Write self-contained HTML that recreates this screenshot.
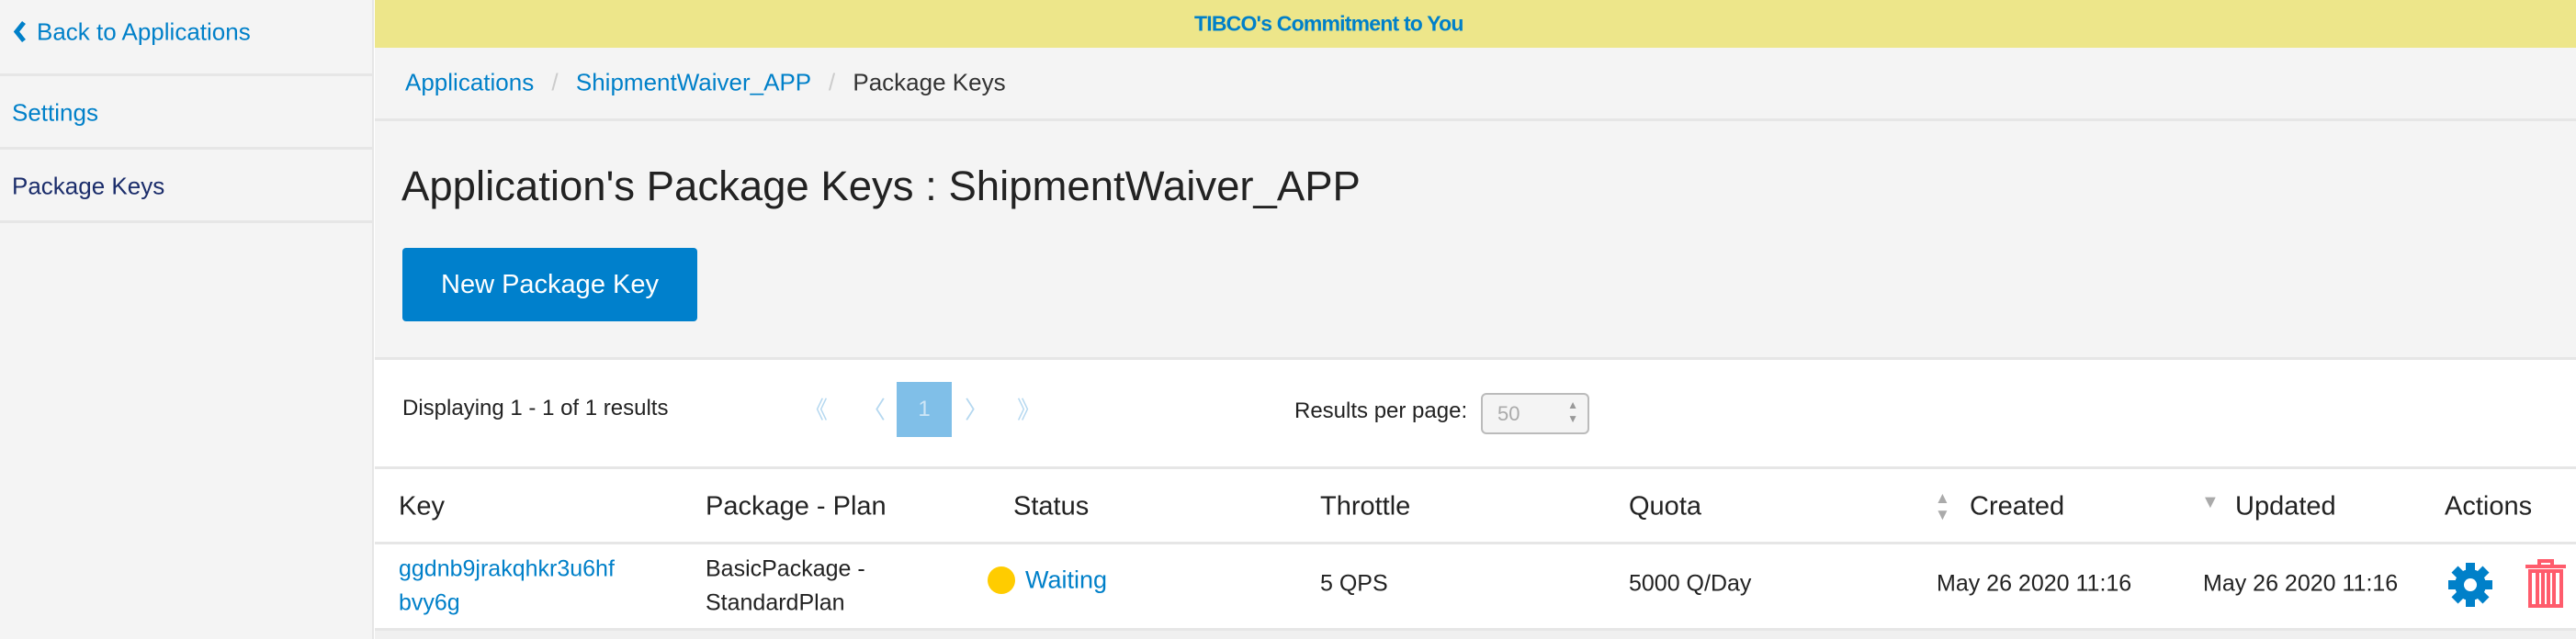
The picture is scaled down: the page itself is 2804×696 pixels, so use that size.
<!DOCTYPE html>
<html><head><meta charset="utf-8"><style>
*{margin:0;padding:0;box-sizing:border-box}
body{width:2804px;height:696px;overflow:hidden;background:#fff;font-family:"Liberation Sans",sans-serif;position:relative}
.a{position:absolute;white-space:nowrap}
.side{position:absolute;left:0;top:0;width:407px;height:696px;background:#f4f4f4;border-right:2px solid #e6e6e6}
.hr{position:absolute;height:3px;background:#e6e6e6}
.blue{color:#0080c9}
.t{font-size:25px;color:#222;transform:translateY(-50%)}
.h{font-size:29px;color:#222;transform:translateY(-50%)}
</style></head><body>
<div class="side"></div>
<div class="a" style="left:14px;top:35px;transform:translateY(-50%);font-size:26px;color:#0080c9"><svg width="16" height="24" viewBox="0 0 16 24" style="vertical-align:-3px;margin-right:10px"><path d="M12 2 L4 12 L12 22" stroke="#0080c9" stroke-width="5" fill="none"/></svg>Back to Applications</div>
<div class="hr" style="left:0;top:80px;width:407px"></div>
<div class="a" style="left:13px;top:123px;transform:translateY(-50%);font-size:26px;color:#0080c9">Settings</div>
<div class="hr" style="left:0;top:160px;width:407px"></div>
<div class="a" style="left:13px;top:203px;transform:translateY(-50%);font-size:26px;color:#1b2d6b">Package Keys</div>
<div class="hr" style="left:0;top:240px;width:407px"></div>

<div class="a" style="left:408px;top:0;width:2396px;height:52px;background:#ede68a"></div>
<div class="a" style="left:1300px;top:26px;transform:translateY(-50%);font-size:23px;font-weight:bold;color:#0080c9;width:292px;text-align:center;letter-spacing:-0.8px">TIBCO's Commitment to You</div>
<div class="a" style="left:408px;top:52px;width:2396px;height:338px;background:#f4f4f4"></div>
<div class="a" style="left:441px;top:90px;transform:translateY(-50%);font-size:26px;color:#0080c9">Applications <span style="color:#ccc;margin:0 12px">/</span> ShipmentWaiver_APP <span style="color:#ccc;margin:0 12px">/</span> <span style="color:#333">Package Keys</span></div>
<div class="hr" style="left:408px;top:129px;width:2396px"></div>
<div class="a" style="left:437px;top:203px;transform:translateY(-50%);font-size:45.5px;color:#222">Application's Package Keys : ShipmentWaiver_APP</div>
<div class="a" style="left:438px;top:270px;width:321px;height:80px;background:#0080cc;border-radius:4px;color:#fff;font-size:29px;line-height:80px;text-align:center">New Package Key</div>
<div class="hr" style="left:408px;top:389px;width:2396px"></div>

<div class="a t" style="left:438px;top:445px;font-size:24px">Displaying 1 - 1 of 1 results</div>
<div class="a" style="left:875px;top:445px;transform:translateY(-50%);font-size:26px;color:#b5d8f0">《</div>
<div class="a" style="left:938px;top:445px;transform:translateY(-50%);font-size:26px;color:#b5d8f0">〈</div>
<div class="a" style="left:976px;top:416px;width:60px;height:60px;background:#80bfe8;color:#cfe6f6;font-size:24px;line-height:60px;text-align:center">1</div>
<div class="a" style="left:1050px;top:445px;transform:translateY(-50%);font-size:26px;color:#b5d8f0">〉</div>
<div class="a" style="left:1107px;top:445px;transform:translateY(-50%);font-size:26px;color:#b5d8f0">》</div>
<div class="a t" style="left:1409px;top:448px;font-size:24px">Results per page:</div>
<div class="a" style="left:1612px;top:428px;width:118px;height:45px;border:2px solid #bbb;border-radius:6px;background:#f4f4f4;color:#aaa;font-size:22px;line-height:41px;padding-left:16px">50<span style="position:absolute;right:10px;top:4px;font-size:12px;line-height:15px;color:#999">▲<br>▼</span></div>
<div class="hr" style="left:408px;top:508px;width:2396px"></div>

<div class="a h" style="left:434px;top:552px">Key</div>
<div class="a h" style="left:768px;top:552px">Package - Plan</div>
<div class="a h" style="left:1103px;top:552px">Status</div>
<div class="a h" style="left:1437px;top:552px">Throttle</div>
<div class="a h" style="left:1773px;top:552px">Quota</div>
<div class="a" style="left:2106px;top:534px;font-size:17px;line-height:18px;color:#aaa">▲<br>▼</div>
<div class="a h" style="left:2144px;top:552px">Created</div>
<div class="a" style="left:2396px;top:536px;font-size:20px;color:#aaa">▼</div>
<div class="a h" style="left:2433px;top:552px">Updated</div>
<div class="a h" style="left:2661px;top:552px">Actions</div>
<div class="hr" style="left:408px;top:590px;width:2396px"></div>

<div class="a t blue" style="left:434px;top:620px;color:#0080c9">ggdnb9jrakqhkr3u6hf</div>
<div class="a t blue" style="left:434px;top:657px;color:#0080c9">bvy6g</div>
<div class="a t" style="left:768px;top:620px">BasicPackage -</div>
<div class="a t" style="left:768px;top:657px">StandardPlan</div>
<div class="a" style="left:1075px;top:617px;width:30px;height:30px;border-radius:50%;background:#fc0"></div>
<div class="a t" style="left:1116px;top:632px;color:#0080c9;font-size:27px">Waiting</div>
<div class="a t" style="left:1437px;top:636px">5 QPS</div>
<div class="a t" style="left:1773px;top:636px">5000 Q/Day</div>
<div class="a t" style="left:2108px;top:636px">May 26 2020 11:16</div>
<div class="a t" style="left:2398px;top:636px">May 26 2020 11:16</div>
<svg class="a" style="left:2665px;top:613px" width="48" height="48" viewBox="-24 -24 48 48"><g fill="#0080c9"><circle r="17"/><g id="tt"><rect x="-5" y="-24" width="10" height="10"/></g><use href="#tt" transform="rotate(45)"/><use href="#tt" transform="rotate(90)"/><use href="#tt" transform="rotate(135)"/><use href="#tt" transform="rotate(180)"/><use href="#tt" transform="rotate(225)"/><use href="#tt" transform="rotate(270)"/><use href="#tt" transform="rotate(315)"/></g><circle r="7" fill="#fff"/></svg>
<svg class="a" style="left:2748px;top:608px" width="46" height="54" viewBox="0 0 46 54"><g fill="none" stroke="#ff5c6c" stroke-width="4"><path d="M16 8V3h14v5"/><path d="M1 9h44"/><path d="M6 14h34v38H6z"/><path d="M14 16v34M20 16v34M26 16v34M32 16v34"/></g></svg>
<div class="hr" style="left:408px;top:684px;width:2396px;height:12px;background:#f0f0f0;border-top:3px solid #e6e6e6"></div>
</body></html>
